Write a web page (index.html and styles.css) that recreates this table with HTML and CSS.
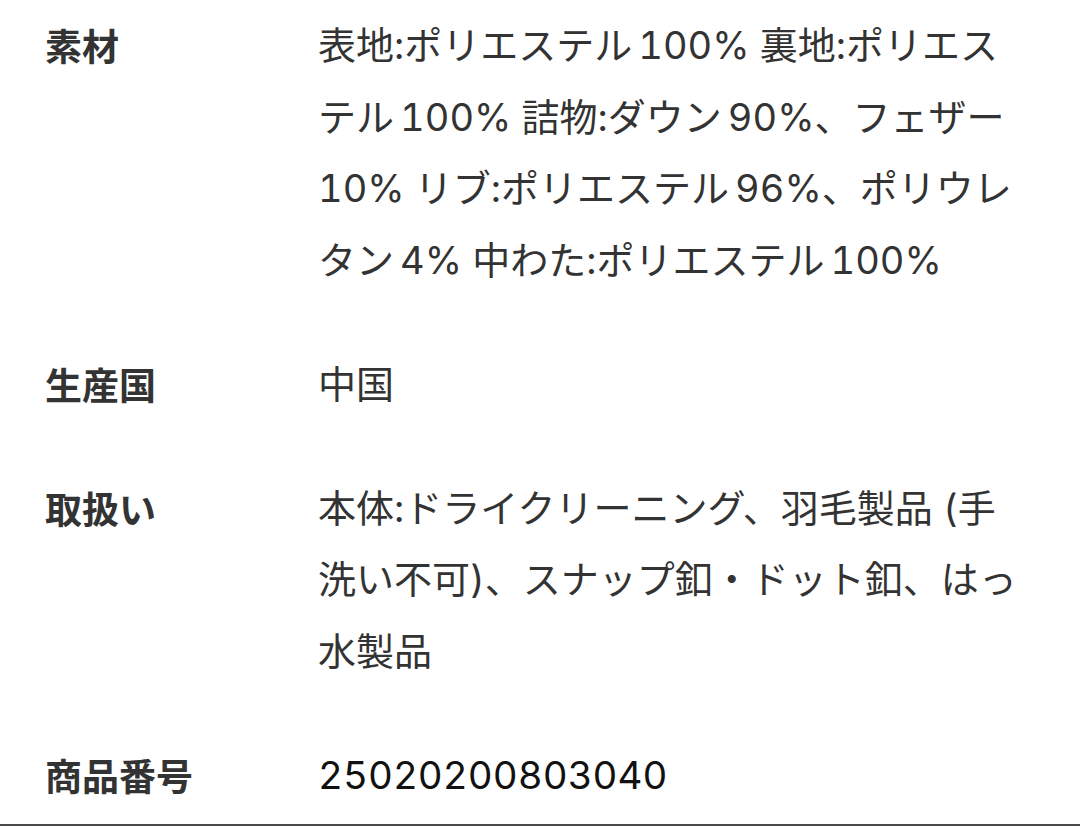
FILE: index.html
```html
<!DOCTYPE html>
<html lang="ja">
<head>
<meta charset="utf-8">
<title>商品詳細</title>
<link rel="stylesheet" href="styles.css">
</head>
<body>
<dl class="spec">
  <div class="row">
    <dt class="label">素材</dt>
    <dd class="value">表地:ポリエステル<span class="num">100%</span> 裏地:ポリエス<br>テル<span class="num">100%</span> 詰物:ダウン<span class="num">90%</span>、フェザー<br>10% リブ:ポリエステル<span class="num">96%</span>、ポリウレ<br>タン<span class="num">4%</span> 中わた:ポリエステル<span class="num">100%</span></dd>
  </div>
  <div class="row">
    <dt class="label">生産国</dt>
    <dd class="value">中国</dd>
  </div>
  <div class="row">
    <dt class="label">取扱い</dt>
    <dd class="value">本体:ドライクリーニング、羽毛製品 (手<br>洗い不可)、スナップ釦・ドット釦、はっ<br>水製品</dd>
  </div>
  <div class="row">
    <dt class="label">商品番号</dt>
    <dd class="value number">25020200803040</dd>
  </div>
</dl>
</body>
</html>
```

FILE: styles.css
```css
html, body {
  margin: 0;
  padding: 0;
  background: #ffffff;
}

body {
  width: 1080px;
  height: 827px;
  overflow: hidden;
  font-family: "Noto Sans CJK JP", "Noto Sans", sans-serif;
  color: #333333;
}

.spec {
  margin: 0;
  padding: 10px 0 13px 45px;
  display: flex;
  flex-direction: column;
  gap: 52.5px;
  border-bottom: 2px solid #4a4a4a;
}

.row {
  display: grid;
  grid-template-columns: 273px 1fr;
}

.label {
  margin: 0;
  font-size: 37px;
  line-height: 71.5px;
  font-weight: 700;
  color: #333333;
}

.value {
  margin: 0;
  font-family: Inter, "Noto Sans CJK JP", sans-serif;
  font-size: 38px;
  line-height: 71.5px;
  font-weight: 400;
  font-variant-numeric: tabular-nums;
  color: #333333;
  white-space: nowrap;
}

.num {
  margin-left: 0.16em;
}

.number {
  font-size: 38.5px;
  color: #111111;
}
```
